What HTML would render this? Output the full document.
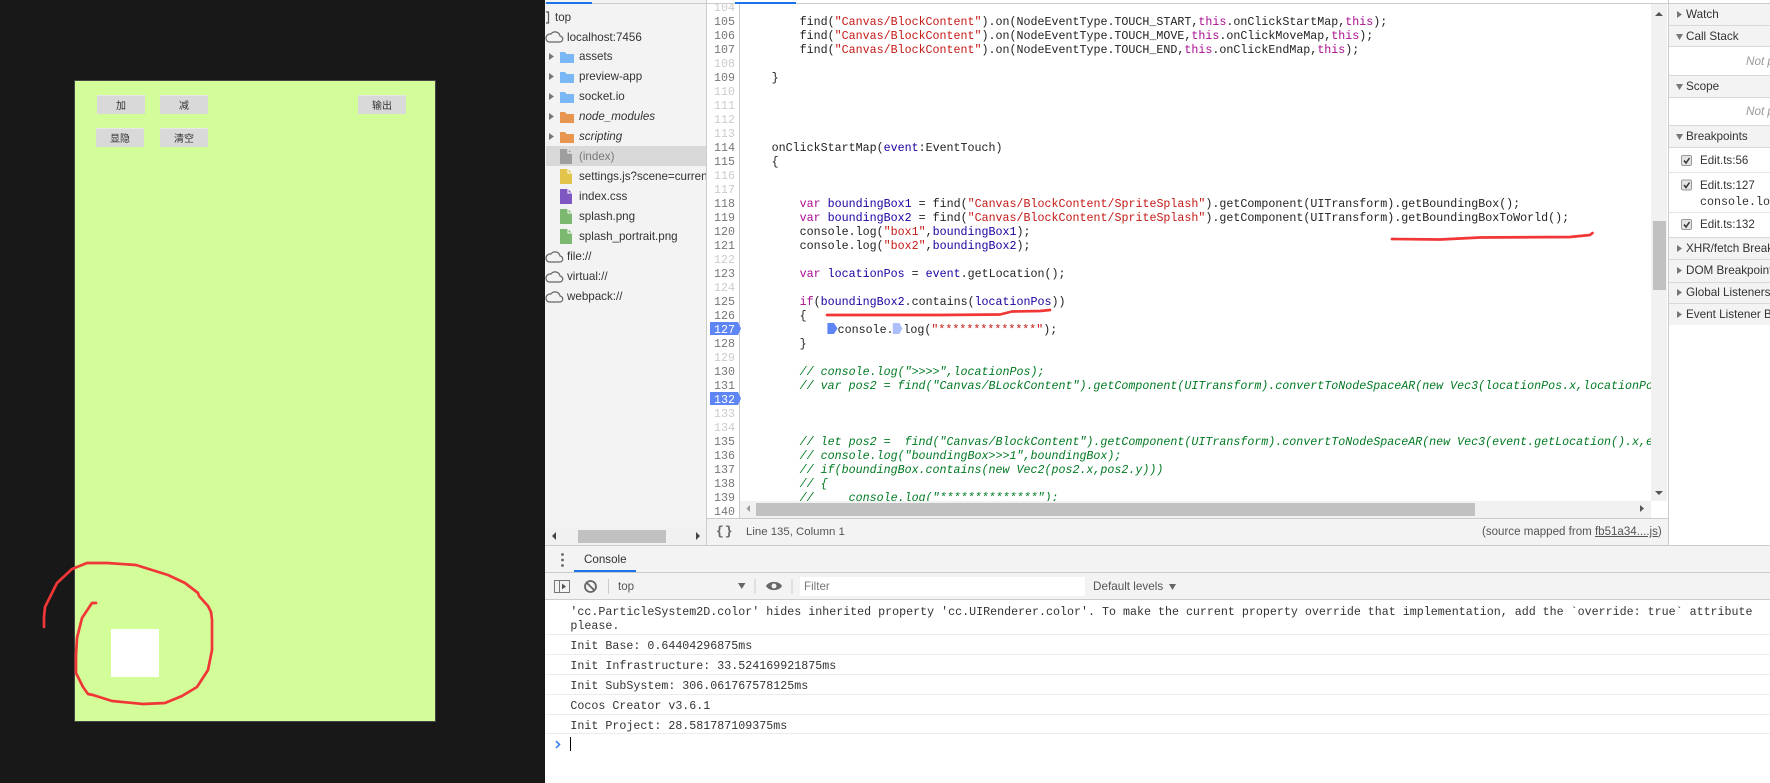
<!DOCTYPE html>
<html><head><meta charset="utf-8"><title>DevTools</title>
<style>
html,body{margin:0;padding:0;background:#181818}
#r{position:relative;width:1770px;height:783px;overflow:hidden;background:#181818;font-family:"Liberation Sans","Noto Sans CJK SC",sans-serif}
#r div,#r span.a{position:absolute}
.b{background:#d9d9d9;border-top:1px solid #e8e8e8;box-sizing:border-box;width:48px;height:19px;font:10px/18px "Noto Sans CJK SC",sans-serif;color:#333;text-align:center}
.t{font-size:11.6px;line-height:20px;height:20px;color:#333;white-space:nowrap}
.n{left:709px;width:26px;margin-top:1px;text-align:right;font:11.66px/14px "Liberation Mono",monospace;color:#777;height:14px}
.n.e{color:#ccc}
.c{left:743.7px;margin-top:1px;font:11.66px/14px "Liberation Mono",monospace;color:#222;white-space:pre;height:14px}
.c i{color:#007a22}
.s{color:#c41a16}.k{color:#aa0d91}.v{color:#1c00a0}
.m{font:11.66px/14px "Liberation Mono",monospace;color:#333;left:570.4px;margin-top:1px;white-space:pre;height:14px}
.h{left:1669px;width:101px;background:#f3f3f3;box-sizing:border-box;border-bottom:1px solid #d8d8d8}
.l{left:1686px;font-size:11.7px;line-height:20px;color:#333;white-space:nowrap;height:20px}
.ln{left:546px;height:1px;width:1224px;background:#ececec}
</style></head><body>
<div id="r">
<!-- game -->
<div style="left:74px;top:80px;width:360px;height:640px;background:#d2fd99;border:1px solid #444"></div>
<div class="b" style="left:97px;top:95px">加</div>
<div class="b" style="left:160px;top:95px">减</div>
<div class="b" style="left:358px;top:95px">输出</div>
<div class="b" style="left:96px;top:128px">显隐</div>
<div class="b" style="left:160px;top:128px">清空</div>
<div style="left:111px;top:629px;width:48px;height:48px;background:#fff"></div>

<!-- devtools bg -->
<div style="left:545px;top:0;width:1225px;height:783px;background:#fff"></div>
<div style="left:545px;top:0;width:161px;height:545px;background:#f3f3f3"></div>
<div style="left:706px;top:0;width:1px;height:545px;background:#ccc"></div>
<div style="left:545px;top:3px;width:1225px;height:1px;background:#ccc"></div>
<div style="left:546px;top:2px;width:46px;height:2px;background:#1a73e8"></div>
<div style="left:735px;top:2px;width:61px;height:2px;background:#1a73e8"></div>

<!-- tree -->
<div style="left:546px;top:146px;width:160px;height:20px;background:#d9d9d9"></div>
<div class="t" style="left:555px;top:8px">top</div>
<div class="t" style="left:567px;top:28px">localhost:7456</div>
<div class="t" style="left:579px;top:47px">assets</div>
<div class="t" style="left:579px;top:67px">preview-app</div>
<div class="t" style="left:579px;top:87px">socket.io</div>
<div class="t" style="left:579px;top:107px;font-style:italic">node_modules</div>
<div class="t" style="left:579px;top:127px;font-style:italic">scripting</div>
<div class="t" style="left:579px;top:147px;color:#777">(index)</div>
<div class="t" style="left:579px;top:167px;width:127px;overflow:hidden">settings.js?scene=current_scene</div>
<div class="t" style="left:579px;top:187px">index.css</div>
<div class="t" style="left:579px;top:207px">splash.png</div>
<div class="t" style="left:579px;top:227px">splash_portrait.png</div>
<div class="t" style="left:567px;top:247px">file://</div>
<div class="t" style="left:567px;top:267px">virtual://</div>
<div class="t" style="left:567px;top:287px">webpack://</div>
<div style="left:546px;top:528px;width:160px;height:17px;background:#f1f1f1"></div>
<div style="left:578px;top:530px;width:88px;height:13px;background:#c1c1c1"></div>

<!-- gutter -->
<div style="left:739px;top:4px;width:1px;height:514px;background:#ccc"></div>
<div style="left:710px;top:322px;width:28px;height:13px;background:#5d85f5"></div>
<div style="left:710px;top:392px;width:28px;height:13px;background:#5d85f5"></div>
<div style="left:707px;top:4px;width:32px;height:10px;overflow:hidden"><div class="n e" style="left:2px;top:-4px">104</div></div>
<div class="n" style="top:14px">105</div><div class="n" style="top:28px">106</div><div class="n" style="top:42px">107</div>
<div class="n e" style="top:56px">108</div><div class="n" style="top:70px">109</div><div class="n e" style="top:84px">110</div>
<div class="n e" style="top:98px">111</div><div class="n e" style="top:112px">112</div><div class="n e" style="top:126px">113</div>
<div class="n" style="top:140px">114</div><div class="n" style="top:154px">115</div><div class="n e" style="top:168px">116</div>
<div class="n e" style="top:182px">117</div><div class="n" style="top:196px">118</div><div class="n" style="top:210px">119</div>
<div class="n" style="top:224px">120</div><div class="n" style="top:238px">121</div><div class="n e" style="top:252px">122</div>
<div class="n" style="top:266px">123</div><div class="n e" style="top:280px">124</div><div class="n" style="top:294px">125</div>
<div class="n" style="top:308px">126</div><div class="n" style="top:322px;color:#fff">127</div><div class="n" style="top:336px">128</div>
<div class="n e" style="top:350px">129</div><div class="n" style="top:364px">130</div><div class="n" style="top:378px">131</div>
<div class="n" style="top:392px;color:#fff">132</div><div class="n e" style="top:406px">133</div><div class="n e" style="top:420px">134</div>
<div class="n" style="top:434px">135</div><div class="n" style="top:448px">136</div><div class="n" style="top:462px">137</div>
<div class="n" style="top:476px">138</div><div class="n" style="top:490px">139</div><div class="n" style="top:504px">140</div>

<!-- code -->
<div style="left:740px;top:4px;width:911px;height:497px;overflow:hidden">
<div style="left:-740px;top:-4px;width:1770px;height:520px">
<div class="c" style="top:14px">        find(<span class="s">"Canvas/BlockContent"</span>).on(NodeEventType.TOUCH_START,<span class="k">this</span>.onClickStartMap,<span class="k">this</span>);</div>
<div class="c" style="top:28px">        find(<span class="s">"Canvas/BlockContent"</span>).on(NodeEventType.TOUCH_MOVE,<span class="k">this</span>.onClickMoveMap,<span class="k">this</span>);</div>
<div class="c" style="top:42px">        find(<span class="s">"Canvas/BlockContent"</span>).on(NodeEventType.TOUCH_END,<span class="k">this</span>.onClickEndMap,<span class="k">this</span>);</div>
<div class="c" style="top:70px">    }</div>
<div class="c" style="top:140px">    onClickStartMap(<span class="v">event</span>:EventTouch)</div>
<div class="c" style="top:154px">    {</div>
<div class="c" style="top:196px">        <span class="k">var</span> <span class="v">boundingBox1</span> = find(<span class="s">"Canvas/BlockContent/SpriteSplash"</span>).getComponent(UITransform).getBoundingBox();</div>
<div class="c" style="top:210px">        <span class="k">var</span> <span class="v">boundingBox2</span> = find(<span class="s">"Canvas/BlockContent/SpriteSplash"</span>).getComponent(UITransform).getBoundingBoxToWorld();</div>
<div class="c" style="top:224px">        console.log(<span class="s">"box1"</span>,<span class="v">boundingBox1</span>);</div>
<div class="c" style="top:238px">        console.log(<span class="s">"box2"</span>,<span class="v">boundingBox2</span>);</div>
<div class="c" style="top:266px">        <span class="k">var</span> <span class="v">locationPos</span> = <span class="v">event</span>.getLocation();</div>
<div class="c" style="top:294px">        <span class="k">if</span>(<span class="v">boundingBox2</span>.contains(<span class="v">locationPos</span>))</div>
<div class="c" style="top:308px">        {</div>
<div class="c" style="top:322px;left:837.6px">console.</div>
<div class="c" style="top:322px;left:903.4px">log(<span class="s">"**************"</span>);</div>
<div class="c" style="top:336px">        }</div>
<div class="c" style="top:364px"><i>        // console.log("&gt;&gt;&gt;&gt;",locationPos);</i></div>
<div class="c" style="top:378px"><i>        // var pos2 = find("Canvas/BLockContent").getComponent(UITransform).convertToNodeSpaceAR(new Vec3(locationPos.x,locationPos.y,0));</i></div>
<div class="c" style="top:434px"><i>        // let pos2 =  find("Canvas/BlockContent").getComponent(UITransform).convertToNodeSpaceAR(new Vec3(event.getLocation().x,event.getLocation().y,0));</i></div>
<div class="c" style="top:448px"><i>        // console.log("boundingBox&gt;&gt;&gt;1",boundingBox);</i></div>
<div class="c" style="top:462px"><i>        // if(boundingBox.contains(new Vec2(pos2.x,pos2.y)))</i></div>
<div class="c" style="top:476px"><i>        // {</i></div>
<div class="c" style="top:490px"><i>        //     console.log("**************");</i></div>
</div></div>

<!-- editor scrollbars -->
<div style="left:1651px;top:4px;width:16px;height:497px;background:#f1f1f1"></div>
<div style="left:1653px;top:221px;width:13px;height:69px;background:#c1c1c1"></div>
<div style="left:740px;top:501px;width:911px;height:17px;background:#f1f1f1"></div>
<div style="left:756px;top:503px;width:719px;height:13px;background:#c1c1c1"></div>
<div style="left:1668px;top:0;width:1px;height:545px;background:#ccc"></div>

<!-- status -->
<div style="left:707px;top:518px;width:961px;height:27px;background:#f3f3f3;border-top:1px solid #ccc;box-sizing:border-box"></div>
<div style="left:716px;top:524px;font:bold 13px/16px 'Liberation Mono',monospace;color:#666;letter-spacing:1px;white-space:pre">{}</div>
<div class="t" style="left:746px;top:522px;color:#555;font-size:11.4px">Line 135, Column 1</div>
<div class="t" style="left:1482px;top:522px;color:#555;font-size:11.55px">(source mapped from <span style="text-decoration:underline">fb51a34....js</span>)</div>

<!-- right sidebar -->
<div class="h" style="top:4px;height:22px"></div>
<div class="h" style="top:26px;height:21px"></div>
<div style="left:1669px;top:47px;width:101px;height:29px;border-bottom:1px solid #d8d8d8;box-sizing:border-box;background:#fff"></div>
<div class="h" style="top:76px;height:22px"></div>
<div style="left:1669px;top:98px;width:101px;height:28px;border-bottom:1px solid #d8d8d8;box-sizing:border-box;background:#fff"></div>
<div class="h" style="top:126px;height:22px"></div>
<div style="left:1669px;top:148px;width:101px;height:25px;border-bottom:1px solid #e6e6e6;box-sizing:border-box;background:#fff"></div>
<div style="left:1669px;top:173px;width:101px;height:40px;border-bottom:1px solid #e6e6e6;box-sizing:border-box;background:#fff"></div>
<div style="left:1669px;top:213px;width:101px;height:25px;border-bottom:1px solid #d8d8d8;box-sizing:border-box;background:#fff"></div>
<div class="h" style="top:238px;height:22px"></div>
<div class="h" style="top:260px;height:23px"></div>
<div class="h" style="top:283px;height:21px"></div>
<div class="h" style="top:304px;height:21px;border-bottom:0"></div>
<div class="l" style="top:5px">Watch</div>
<div class="l" style="top:27px">Call Stack</div>
<div class="l" style="left:1746px;top:52px;color:#999;font-style:italic;width:24px;overflow:hidden">Not paused</div>
<div class="l" style="top:77px">Scope</div>
<div class="l" style="left:1746px;top:102px;color:#999;font-style:italic;width:24px;overflow:hidden">Not paused</div>
<div class="l" style="top:127px">Breakpoints</div>
<div class="l" style="left:1700px;top:151px;font-size:11.6px">Edit.ts:56</div>
<div class="l" style="left:1700px;top:176px;font-size:11.6px">Edit.ts:127</div>
<div class="l" style="left:1700px;top:192px;width:70px;overflow:hidden;font:11.66px/20px 'Liberation Mono',monospace">console.log("***</div>
<div class="l" style="left:1700px;top:215px;font-size:11.6px">Edit.ts:132</div>
<div class="l" style="top:239px;width:84px;overflow:hidden">XHR/fetch Breakpoints</div>
<div class="l" style="top:261px;width:84px;overflow:hidden">DOM Breakpoints</div>
<div class="l" style="top:283px;width:84px;overflow:hidden">Global Listeners</div>
<div class="l" style="top:305px;width:84px;overflow:hidden">Event Listener Breakpoints</div>

<!-- console -->
<div style="left:545px;top:545px;width:1225px;height:28px;background:#f3f3f3;border-top:1px solid #ccc;border-bottom:1px solid #ccc;box-sizing:border-box"></div>
<div style="left:574px;top:570px;width:62px;height:2px;background:#1a73e8"></div>
<div class="t" style="left:584px;top:550px;font-size:11.6px">Console</div>
<div style="left:545px;top:573px;width:1225px;height:27px;background:#f3f3f3;border-bottom:1px solid #ccc;box-sizing:border-box"></div>
<div style="left:800px;top:577px;width:285px;height:19px;background:#fff"></div>
<div class="t" style="left:618px;top:577px;color:#555;font-size:11.6px">top</div>
<div class="t" style="left:804px;top:577px;color:#777;font-size:11.6px">Filter</div>
<div class="t" style="left:1093px;top:577px;color:#555;font-size:11.7px">Default levels</div>
<div class="m" style="top:604px">'cc.ParticleSystem2D.color' hides inherited property 'cc.UIRenderer.color'. To make the current property override that implementation, add the `override: true` attribute</div>
<div class="m" style="top:618px">please.</div>
<div class="ln" style="top:634px"></div>
<div class="m" style="top:638px">Init Base: 0.64404296875ms</div>
<div class="ln" style="top:654px"></div>
<div class="m" style="top:658px">Init Infrastructure: 33.524169921875ms</div>
<div class="ln" style="top:674px"></div>
<div class="m" style="top:678px">Init SubSystem: 306.061767578125ms</div>
<div class="ln" style="top:694px"></div>
<div class="m" style="top:698px">Cocos Creator v3.6.1</div>
<div class="ln" style="top:714px"></div>
<div class="m" style="top:718px">Init Project: 28.581787109375ms</div>
<div class="ln" style="top:733px"></div>
<div style="left:570px;top:737px;width:1px;height:14px;background:#000"></div>

<!-- icons + annotations -->
<svg width="1770" height="783" viewBox="0 0 1770 783" style="position:absolute;left:0;top:0" fill="none">
<!-- tree frame icon -->
<path d="M546 12h2.5v11H546" stroke="#555" stroke-width="1.2"/>
<!-- clouds -->
<g stroke="#666" stroke-width="1.2" fill="#f3f3f3">
<path d="M549 42h10.5a3 3 0 0 0 .5-6a5 5 0 0 0-9-2a4 4 0 0 0-3.500 1a4 4 0 0 0 1.500 7z"/>
<path d="M549 262h10.500a3 3 0 0 0 .5-6a5 5 0 0 0-9-2a4 4 0 0 0-3.500 1a4 4 0 0 0 1.500 7z"/>
<path d="M549 282h10.500a3 3 0 0 0 .5-6a5 5 0 0 0-9-2a4 4 0 0 0-3.500 1a4 4 0 0 0 1.500 7z"/>
<path d="M549 302h10.500a3 3 0 0 0 .5-6a5 5 0 0 0-9-2a4 4 0 0 0-3.500 1a4 4 0 0 0 1.500 7z"/>
</g>
<!-- tree arrows -->
<g fill="#777">
<path d="M549 53l5 3.500-5 3.500z"/><path d="M549 73l5 3.500-5 3.500z"/><path d="M549 93l5 3.500-5 3.500z"/><path d="M549 113l5 3.500-5 3.500z"/><path d="M549 133l5 3.500-5 3.500z"/>
</g>
<!-- folders -->
<g fill="#7ab8f5">
<path d="M560 52h5l1.500 2h7.500v9h-14z"/><path d="M560 72h5l1.500 2h7.500v9h-14z"/><path d="M560 92h5l1.500 2h7.500v9h-14z"/>
</g>
<g fill="#e8954f">
<path d="M560 112h5l1.500 2h7.500v9h-14z"/><path d="M560 132h5l1.500 2h7.500v9h-14z"/>
</g>
<!-- files -->
<path d="M560 149h8l4 4v11h-12z" fill="#9e9e9e"/>
<path d="M560 169h8l4 4v11h-12z" fill="#e3c44b"/>
<path d="M560 189h8l4 4v11h-12z" fill="#7e57c2"/>
<path d="M560 209h8l4 4v11h-12z" fill="#7cb86f"/>
<path d="M560 229h8l4 4v11h-12z" fill="#7cb86f"/>
<g stroke="#fff" stroke-width="1"><path d="M568 149v4h4M568 169v4h4M568 189v4h4M568 209v4h4M568 229v4h4"/></g>
<!-- sidebar scrollbar arrows -->
<path d="M556 532v8l-4-4z M696 532v8l4-4z" fill="#444"/>
<!-- editor scroll arrows -->
<path d="M1655 16l4-4 4 4z M1655 491h8l-4 4z" fill="#555"/>
<path d="M750 505v7l-3.500-3.500z" fill="#999"/>
<path d="M1640 505v7l4-3.500z" fill="#555"/>
<!-- breakpoint tips -->
<path d="M738 322l3 6.500-3 6.500z M738 392l3 6.500-3 6.500z" fill="#5d85f5"/>
<path d="M827.400 323h6.500l3.700 5.500-3.700 5.500h-6.500z" fill="#5d85f5"/>
<path d="M892.800 323h6.500l3.100 5.500-3.100 5.500h-6.500z" fill="#aebefa"/>
<!-- right sidebar arrows -->
<g fill="#777">
<path d="M1677 11l5 3.500-5 3.500z"/><path d="M1677 245l5 3.500-5 3.500z"/><path d="M1677 267l5 3.500-5 3.500z"/><path d="M1677 289l5 3.500-5 3.500z"/><path d="M1677 311l5 3.500-5 3.500z"/>
<path d="M1676 34h7l-3.500 6z"/><path d="M1676 84h7l-3.500 6z"/><path d="M1676 134h7l-3.500 6z"/>
</g>
<!-- checkboxes -->
<g>
<rect x="1681.500" y="155.500" width="10" height="10" rx="1.500" fill="#e4e4e4" stroke="#999"/>
<rect x="1681.500" y="180" width="10" height="10" rx="1.500" fill="#e4e4e4" stroke="#999"/>
<rect x="1681.500" y="219.500" width="10" height="10" rx="1.500" fill="#e4e4e4" stroke="#999"/>
<path d="M1684 160.500l2 2.500 3.500-5M1684 185l2 2.500 3.500-5M1684 224.500l2 2.500 3.500-5" stroke="#333" stroke-width="1.500"/>
</g>
<!-- console toolbar -->
<g fill="#666"><circle cx="562.500" cy="554.500" r="1.400"/><circle cx="562.500" cy="560" r="1.400"/><circle cx="562.500" cy="565.500" r="1.400"/></g>
<rect x="554.500" y="580.500" width="15" height="12" fill="none" stroke="#777"/>
<path d="M559.500 580v13" stroke="#777"/>
<path d="M562 583.500l4 3-4 3z" fill="#555"/>
<circle cx="590.500" cy="586.500" r="5.500" stroke="#666" stroke-width="1.800"/>
<path d="M586.700 582.700l7.600 7.600" stroke="#666" stroke-width="1.800"/>
<path d="M608.500 579v15M755 579v15M792 579v15" stroke="#ccc"/>
<path d="M738 583h7.500l-3.750 6z" fill="#666"/>
<path d="M766 586c3-5.500 13-5.500 16 0c-3 5.500-13 5.500-16 0z" fill="#666"/>
<circle cx="774" cy="586" r="2.500" fill="#f3f3f3"/>
<path d="M1169 584h7l-3.500 6z" fill="#666"/>
<!-- prompt -->
<path d="M556 741l3.500 3.500-3.500 3.500" stroke="#2f76f2" stroke-width="1.500"/>
<!-- red annotation -->
<g stroke="#f03636" stroke-width="2.700" stroke-linecap="round" stroke-linejoin="round">
<path d="M44 627L44 617L45 607L57 583L72 569L87 563L107 563L136 565L168 575L185 583L198 593L199 596L208 606L211 612L212 620L212 650L208 670L197 687L182 696L165 703L143 704L112 701L93 695L88 694L83 687L76 673L76 655L77 638L82 618L92 603L96 603"/>
<path d="M1392 239L1440 239.500L1480 237.500L1570 237L1590 235L1592.500 233"/>
<path d="M827 315L880 315L940 315L1000 314.500L1012 311.500L1040 311L1050 310"/>
</g>
</svg>
</div>
</body></html>
